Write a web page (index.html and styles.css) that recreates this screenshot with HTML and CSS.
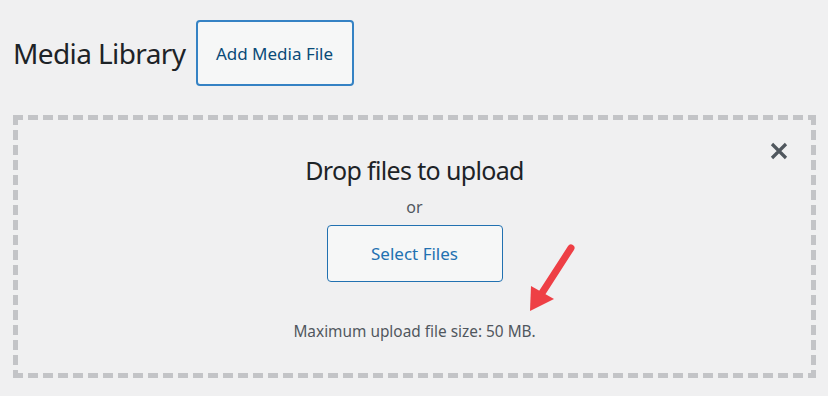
FILE: index.html
```html
<!DOCTYPE html>
<html>
<head>
<title>Media Library</title>
<link rel="stylesheet" href="styles.css">
</head>
<body>
<div class="wrap">
  <div class="head">
    <h1 class="title">Media Library</h1>
    <button class="add-btn" type="button">Add Media File</button>
  </div>
  <div class="uploader">
    <button class="close" type="button" aria-label="Close">
      <svg width="18" height="18" viewBox="0 0 18 18"><path d="M2 2 L16 16 M16 2 L2 16" stroke="#50575e" stroke-width="3.2" fill="none"/></svg>
    </button>
    <h2 class="drop">Drop files to upload</h2>
    <p class="or">or</p>
    <button class="select-btn" type="button">Select Files</button>
    <p class="max">Maximum upload file size: 50 MB.</p>
    <svg class="arrow" width="70" height="90" viewBox="0 0 70 90">
      <line x1="53" y1="13" x2="24" y2="58" stroke="#ee3f45" stroke-width="7" stroke-linecap="round"/>
      <polygon points="12,76 13,51 36,64" fill="#ee3f45"/>
    </svg>
  </div>
</div>
</body>
</html>
```

FILE: styles.css
```css
body{
	margin:0;
	background-color:#f0f0f1;
	font-family:"Noto Sans", "Open Sans", sans-serif;
	color:#1d2327;
}
.wrap{
	padding:20px 12px 0 13px;
}
.head{
	display:flex;
	align-items:center;
	gap:10px;
}
.title{
	margin:0;
	font-size:28px;
	font-weight:400;
	letter-spacing:-0.6px;
}
.add-btn{
	width:158px;
	height:66px;
	border:2px solid #3582c4;
	border-radius:4px;
	background-color:#f6f7f7;
	color:#0a4b78;
	font-family:inherit;
	font-size:17px;
}
.uploader{
	position:relative;
	margin-top:29px;
	width:803px;
	height:263px;
	box-sizing:border-box;
	padding:5px;
	display:flex;
	flex-direction:column;
	align-items:center;
	background:
		repeating-linear-gradient(to right, #c3c4c7 0 10px, transparent 10px 15px) top left / 100% 5px no-repeat,
		repeating-linear-gradient(to right, #c3c4c7 0 10px, transparent 10px 15px) bottom left / 100% 5px no-repeat,
		repeating-linear-gradient(to bottom, #c3c4c7 0 10px, transparent 10px 15px) top left / 5px 100% no-repeat,
		repeating-linear-gradient(to bottom, #c3c4c7 0 10px, transparent 10px 15px) top right / 5px 100% no-repeat;
}
.close{
	position:absolute;
	top:27px;
	right:28px;
	padding:0;
	border:0;
	background:none;
	line-height:0;
}
.drop{
	margin:33px 0 0;
	font-size:25px;
	font-weight:400;
	line-height:34px;
	letter-spacing:-0.65px;
}
.or{
	margin:9px 0 0;
	font-size:16px;
	color:#50575e;
}
.select-btn{
	margin-top:7px;
	width:176px;
	height:57px;
	border:1px solid #2271b1;
	border-radius:4px;
	background-color:#f6f7f7;
	color:#2271b1;
	font-family:inherit;
	font-size:17px;
}
.max{
	margin:39px 0 0;
	font-size:15.4px;
	color:#50575e;
}
.arrow{
	position:absolute;
	left:505px;
	top:120px;
}
```
